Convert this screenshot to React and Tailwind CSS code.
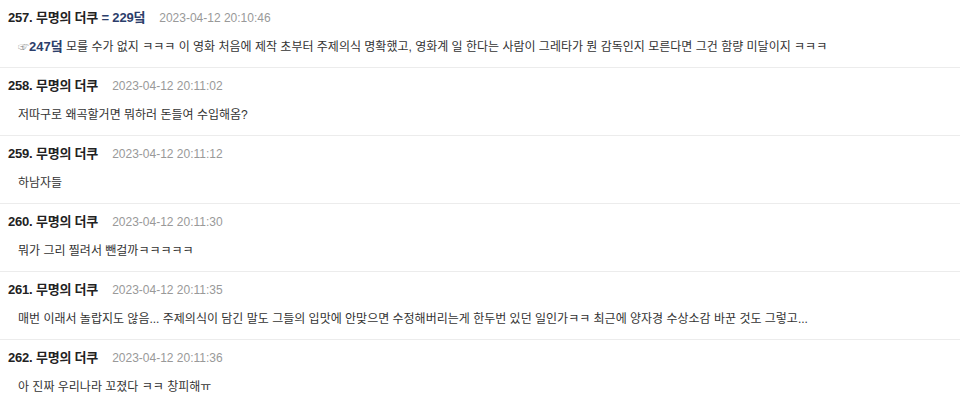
const comments = [
  { no: 257, date: '2023-04-12 20:10:46', anchor: '= 229덬', reply: '247덬', body: '모를 수가 없지 ㅋㅋㅋ 이 영화 처음에 제작 초부터 주제의식 명확했고, 영화계 일 한다는 사람이 그레타가 뭔 감독인지 모른다면 그건 함량 미달이지 ㅋㅋㅋ' },
  { no: 258, date: '2023-04-12 20:11:02', body: '저따구로 왜곡할거면 뭐하러 돈들여 수입해옴?' },
  { no: 259, date: '2023-04-12 20:11:12', body: '하남자들' },
  { no: 260, date: '2023-04-12 20:11:30', body: '뭐가 그리 찔려서 뺀걸까ㅋㅋㅋㅋㅋ' },
  { no: 261, date: '2023-04-12 20:11:35', body: '매번 이래서 놀랍지도 않음... 주제의식이 담긴 말도 그들의 입맛에 안맞으면 수정해버리는게 한두번 있던 일인가ㅋㅋ 최근에 양자경 수상소감 바꾼 것도 그렇고...' },
  { no: 262, date: '2023-04-12 20:11:36', body: '아 진짜 우리나라 꼬졌다 ㅋㅋ 창피해ㅠ' },
];

function Comment({ c }) {
  return (
    <div className="border-b border-[#ececec] pt-[8px] pb-[10px]">
      <div className="flex items-center pl-[8px] h-[20px]">
        <span className="text-[13px] font-bold text-[#222] tracking-[-0.2px]">
          {c.no}. 무명의 더쿠
          {c.anchor && <span className="text-[#2c3e6b]"> {c.anchor}</span>}
        </span>
        <span className="ml-[14px] text-[12px] text-[#999]">{c.date}</span>
      </div>
      <div className="mt-[9px] pl-[18px] h-[20px] flex items-center text-[12px] text-[#333]">
        <span>
          {c.reply && (
            <>
              <span className="text-[#999] text-[11px]">☞</span>
              <span className="font-bold text-[13px] text-[#2c3e6b]">{c.reply}</span>{' '}
            </>
          )}
          {c.body}
        </span>
      </div>
    </div>
  );
}

export default function App() {
  return (
    <div
      className="w-[960px] h-[406px] overflow-hidden bg-white"
      style={{ fontFamily: '"Liberation Sans", "Noto Sans CJK KR", sans-serif' }}
    >
      {comments.map((c) => (
        <Comment key={c.no} c={c} />
      ))}
    </div>
  );
}
